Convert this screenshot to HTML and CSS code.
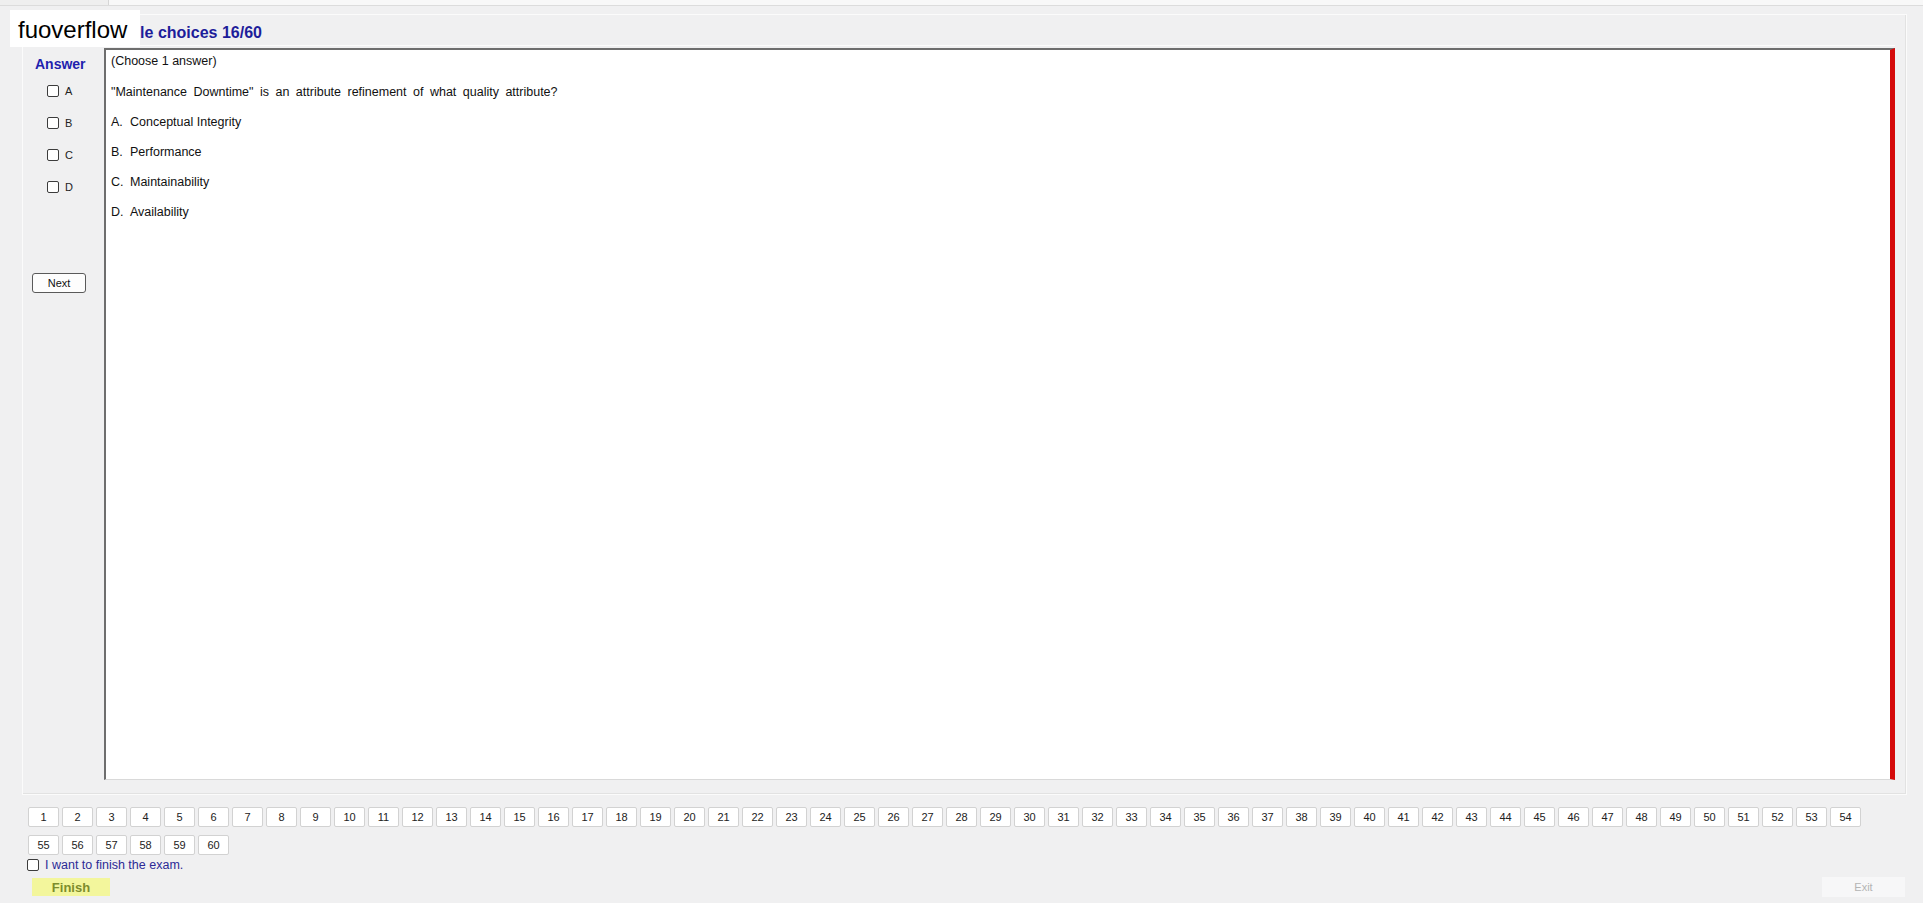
FILE: index.html
```html
<!DOCTYPE html>
<html lang="en">
<head>
    <meta charset="UTF-8">
    <title>Exam - Multiple choices</title>
    <link rel="stylesheet" href="styles.css">
</head>
<body>
    <div class="window">
        <div class="tabs"><div class="tab"></div></div>

        <div class="panel">
            <div class="panel-title">Multiple choices 16/60</div>
            <div class="panel-body">
                <div class="answer-col">
                    <div class="answer-head">Answer</div>
                    <label class="answer-opt"><input type="checkbox"> A</label>
                    <label class="answer-opt"><input type="checkbox"> B</label>
                    <label class="answer-opt"><input type="checkbox"> C</label>
                    <label class="answer-opt"><input type="checkbox"> D</label>
                    <button class="next-btn">Next</button>
                </div>
                <div class="question-box">
                    <p class="choose">(Choose 1 answer)</p>
                    <p class="question-text">"Maintenance Downtime" is an attribute refinement of what quality attribute?</p>
                    <p><span class="letter">A.</span>Conceptual Integrity</p>
                    <p><span class="letter">B.</span>Performance</p>
                    <p><span class="letter">C.</span>Maintainability</p>
                    <p><span class="letter">D.</span>Availability</p>
                </div>
            </div>
        </div>

        <div class="pager" id="pager"></div>

        <label class="finish-check"><input type="checkbox"> I want to finish the exam.</label>

        <div class="footer">
            <button class="finish-btn">Finish</button>
            <button class="exit-btn">Exit</button>
        </div>

        <div class="logo">fuoverflow</div>
    </div>

    <script>
        const pager = document.getElementById('pager');
        for (let i = 1; i <= 60; i++) {
            const btn = document.createElement('button');
            btn.className = 'page-btn';
            btn.textContent = i;
            pager.appendChild(btn);
        }
    </script>
</body>
</html>
```

FILE: styles.css
```css
body {
    margin: 0;
    background-color: #ffffff;
    font-family: 'Liberation Sans', Arial, sans-serif;
    color: #111;
}

.window {
    position: relative;
    width: 1923px;
    height: 903px;
    background-color: #f0f0f1;
    overflow: hidden;
}

.tabs {
    height: 5px;
    border-bottom: 1px solid #dcdcdc;
    background-color: #f8f8f8;
}

.tab {
    width: 108px;
    height: 5px;
    background-color: #efefef;
    border-right: 1px solid #d6d6d6;
}

.panel {
    margin: 8px 0 0 22px;
    border: 1px solid #fbfbfb;
    box-shadow: inset -1px -1px 0 #e2e2e2;
    padding: 0 11px 14px 0;
    width: 1872px;
}

.panel-title {
    height: 20px;
    padding: 8px 0 2px 70px;
    line-height: 20px;
    font-size: 16px;
    font-weight: bold;
    color: #1d1d9a;
    border-bottom: 1px solid #fcfcfc;
    margin-bottom: 2px;
}

.panel-body {
    display: flex;
    height: 732px;
}

.answer-col {
    width: 81px;
    display: flex;
    flex-direction: column;
    align-items: flex-start;
    padding-top: 7px;
    box-sizing: border-box;
}

.answer-head {
    margin-left: 12px;
    line-height: 18px;
    font-size: 14px;
    font-weight: bold;
    color: #1f1fae;
    margin-bottom: 2px;
}

.answer-opt {
    height: 32px;
    display: flex;
    align-items: center;
    font-size: 11px;
    color: #222;
    margin-left: 24px;
}

.answer-opt input,
.finish-check input {
    appearance: none;
    width: 12px;
    height: 12px;
    margin: 0 6px 0 0;
    border: 1px solid #3c3c3c;
    border-radius: 2px;
    background-color: #fff;
}

.next-btn {
    margin: 70px 0 0 9px;
    width: 54px;
    height: 20px;
    padding: 0;
    font-family: inherit;
    font-size: 11px;
    color: #111;
    background-color: #fdfdfd;
    border: 1px solid #5a5a5a;
    border-radius: 3px;
}

.question-box {
    flex: 1;
    background-color: #ffffff;
    border-left: 2px solid #6e6e6e;
    border-top: 2px solid #6e6e6e;
    border-right: 5px solid #d50b0b;
    border-bottom: 1px solid #d9d9d9;
    padding: 2px 0 0 5px;
}

.question-box p {
    margin: 0 0 12px;
    line-height: 18px;
    font-size: 12.5px;
}

.question-box .choose {
    margin-bottom: 13px;
}

.question-text {
    word-spacing: 3px;
}

.letter {
    display: inline-block;
    width: 19px;
}

.pager {
    display: flex;
    flex-wrap: wrap;
    gap: 8px 3px;
    width: 1840px;
    margin: 12px 0 0 28px;
}

.page-btn {
    width: 31px;
    height: 20px;
    padding: 0;
    font-family: inherit;
    font-size: 11px;
    color: #222;
    background-color: #ffffff;
    border: 1px solid #d2d2d2;
    border-radius: 2px;
}

.finish-check {
    display: flex;
    align-items: center;
    margin: 3px 0 0 27px;
    height: 14px;
    font-size: 12.5px;
    color: #2c2a96;
}

.footer {
    display: flex;
    justify-content: space-between;
    align-items: center;
    margin: 5px 0 0 32px;
    width: 1873px;
}

.finish-btn {
    width: 78px;
    height: 18px;
    padding: 0;
    font-family: inherit;
    font-size: 13px;
    font-weight: bold;
    color: #7d8c2c;
    background-color: #f3f69c;
    border: none;
}

.exit-btn {
    width: 83px;
    height: 20px;
    padding: 0;
    font-family: inherit;
    font-size: 11px;
    color: #b4b4b4;
    background-color: #f7f7f8;
    border: none;
}

.logo {
    position: absolute;
    left: 10px;
    top: 10px;
    width: 130px;
    height: 37px;
    box-sizing: border-box;
    padding: 3px 0 0 8px;
    line-height: 34px;
    background-color: #ffffff;
    font-size: 24px;
    color: #000;
}
```
